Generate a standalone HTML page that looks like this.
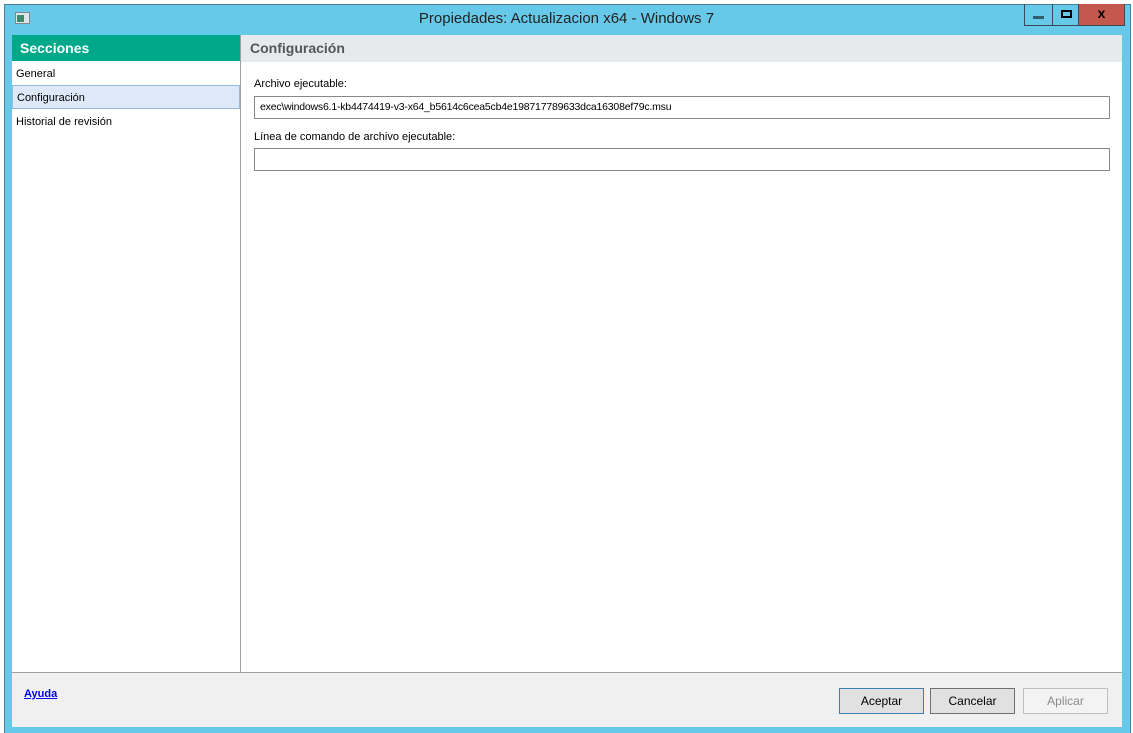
<!DOCTYPE html>
<html><head><style>
body{margin:0;width:1133px;height:733px;position:relative;overflow:hidden;background:#fff;font-family:"Liberation Sans",sans-serif;font-size:11px;color:#000}
div{position:absolute;box-sizing:border-box}
.btn{top:688px;height:26px;width:85px;text-align:center;line-height:24px;font-size:12px}
</style></head><body>
<div style="left:4px;top:4px;width:1127px;height:729px;background:#66c9e9;border:1px solid #4a7f9a;border-bottom:none"></div>
<div style="left:15px;top:12px;width:15px;height:12px;background:#dfe6ea;border:1px solid #7a8a92"><div style="left:1px;top:2px;width:7px;height:7px;background:#3d8a6a"></div></div>
<div style="left:0;top:10px;width:1133px;text-align:center;font-size:15px;color:#222">Propiedades: Actualizacion x64 - Windows 7</div>
<div style="left:1024px;top:4px;width:101px;height:22px;border:1px solid #3a4a55;border-top:none"></div>
<div style="left:1052px;top:4px;width:1px;height:21px;background:#3a4a55"></div>
<div style="left:1078px;top:4px;width:47px;height:22px;background:#c4584f;border:1px solid #3a4a55;border-top:none"></div>
<div style="left:1033px;top:16px;width:11px;height:3px;background:#2f5f70"></div>
<div style="left:1061px;top:10px;width:11px;height:8px;border:2px solid #000"></div>
<div style="left:1078px;top:5px;width:47px;text-align:center;font-size:14px;font-weight:bold">x</div>
<div style="left:12px;top:35px;width:1110px;height:692px;background:#fff"></div>
<div style="left:12px;top:35px;width:228px;height:26px;background:#00a88a;color:#fff;font-weight:bold;font-size:14px;padding:5px 8px">Secciones</div>
<div style="left:16px;top:68px">General</div>
<div style="left:12px;top:85px;width:228px;height:24px;background:#dde9f8;border:1px solid #97b9dd;padding:6px 4px">Configuración</div>
<div style="left:16px;top:116px">Historial de revisión</div>
<div style="left:240px;top:35px;width:1px;height:638px;background:#a0a0a0"></div>
<div style="left:241px;top:35px;width:881px;height:27px;background:#e6eaed;color:#555;font-weight:bold;font-size:14px;padding:5px 9px">Configuración</div>
<div style="left:254px;top:78px">Archivo ejecutable:</div>
<div style="left:254px;top:96px;width:856px;height:23px;border:1px solid #888;padding:4px 5px;font-size:10.5px;letter-spacing:-0.2px">exec\windows6.1-kb4474419-v3-x64_b5614c6cea5cb4e198717789633dca16308ef79c.msu</div>
<div style="left:254px;top:131px">Línea de comando de archivo ejecutable:</div>
<div style="left:254px;top:148px;width:856px;height:23px;border:1px solid #888"></div>
<div style="left:12px;top:672px;width:1110px;height:55px;background:#f0f0f0;border-top:1px solid #a0a0a0"></div>
<div style="left:24px;top:688px;color:#00e;font-weight:bold;text-decoration:underline">Ayuda</div>
<div class="btn" style="left:839px;background:#e1e1e1;border:1px solid #3c7fb1">Aceptar</div>
<div class="btn" style="left:930px;background:#e1e1e1;border:1px solid #707070">Cancelar</div>
<div class="btn" style="left:1023px;background:#f3f3f3;border:1px solid #bfbfbf;color:#8a8a8a">Aplicar</div>
</body></html>
